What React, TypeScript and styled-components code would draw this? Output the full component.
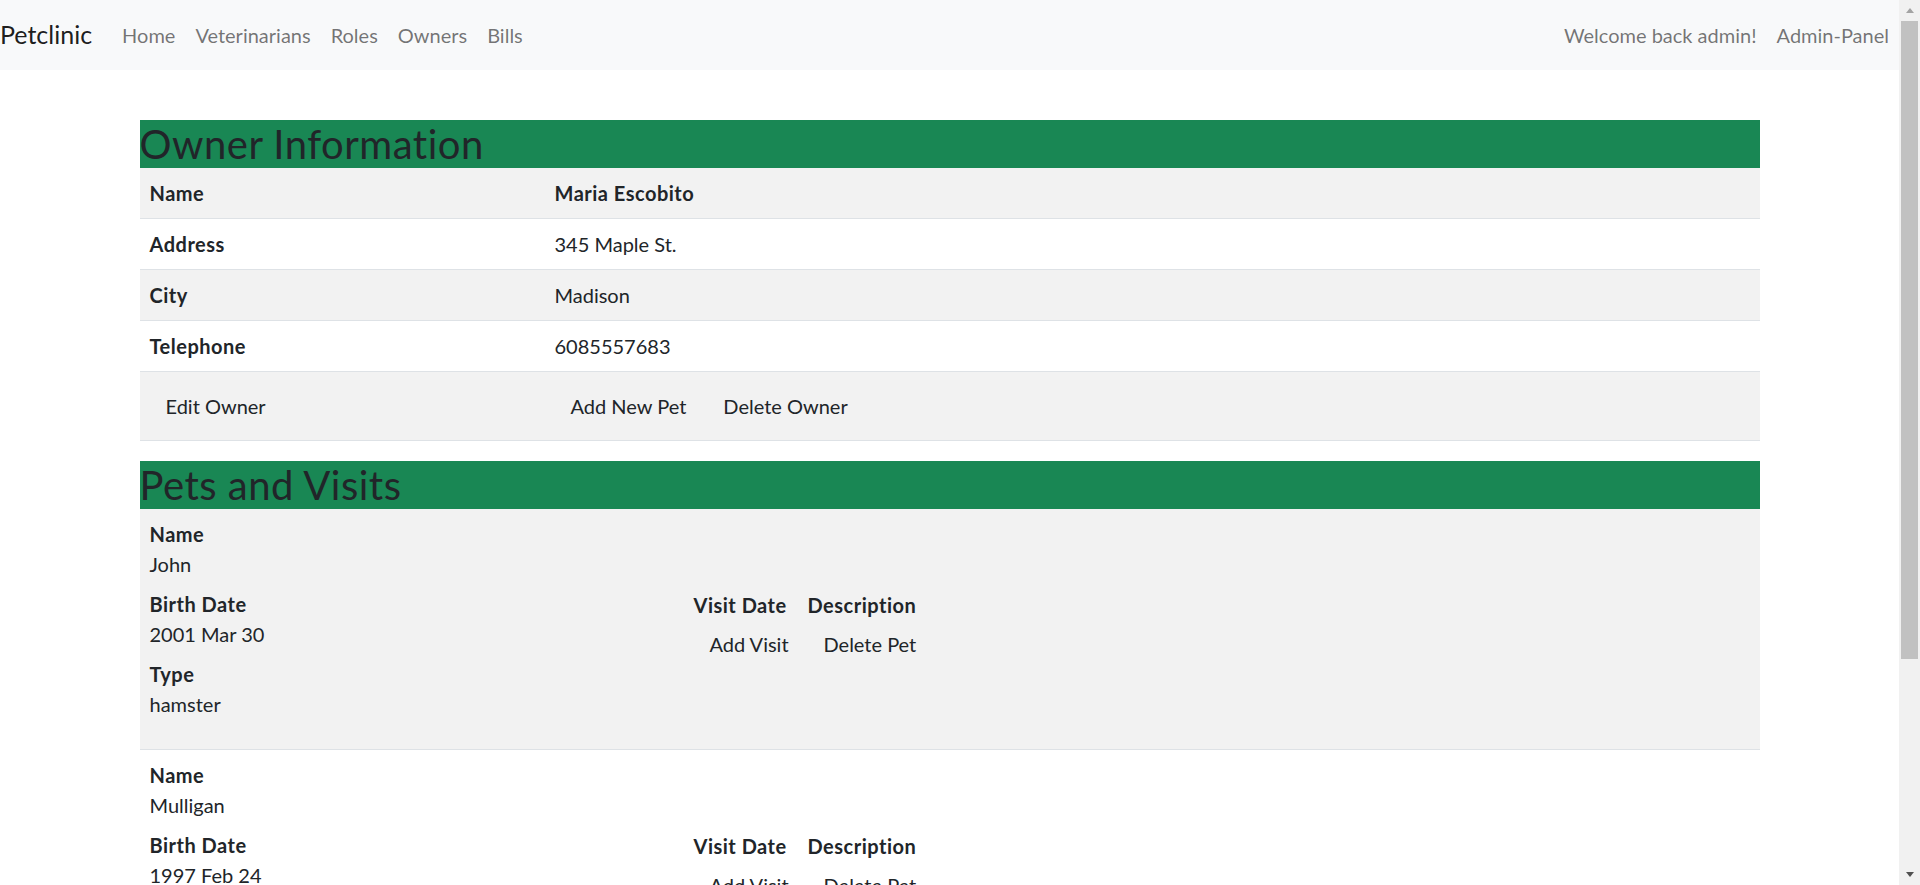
import React from 'react';
import styled, { createGlobalStyle } from 'styled-components';

const GlobalStyle = createGlobalStyle`
  *, *::before, *::after { box-sizing: border-box; }
  html { scrollbar-width: none; }
  body {
    margin: 0;
    font-family: Lato, "Noto Sans", sans-serif;
    font-size: 20px;
    line-height: 1.5;
    color: #212529;
    background: #fff;
  }
`;

const Shell = styled.div`
  display: flex;
  align-items: flex-start;
`;

const Page = styled.div`
  flex: 1;
  min-width: 0;
`;

const ScrollTrack = styled.div`
  position: sticky;
  top: 0;
  flex-shrink: 0;
  width: 21px;
  height: 100vh;
  background: #f1f1f1;
  display: flex;
  flex-direction: column;
  align-items: center;
`;

const ScrollArrow = styled.div<{ $down?: boolean }>`
  height: 21px;
  width: 21px;
  display: flex;
  align-items: center;
  justify-content: center;
  margin-top: ${(p) => (p.$down ? 'auto' : '0')};
  &::after {
    content: '';
    width: 0;
    height: 0;
    border-left: 4.5px solid transparent;
    border-right: 4.5px solid transparent;
    ${(p) =>
      p.$down
        ? 'border-top: 5px solid #505050;'
        : 'border-bottom: 5px solid #a3a3a3;'}
  }
`;

const ScrollThumb = styled.div`
  width: 17px;
  height: 638px;
  background: #c1c1c1;
`;

const Navbar = styled.nav`
  display: flex;
  align-items: center;
  height: 70px;
  padding: 10px 0;
  background: #f8f9fa;
`;

const Brand = styled.a`
  font-size: 25px;
  line-height: 37.5px;
  padding: 6.25px 0;
  margin-right: 20px;
  color: rgba(0, 0, 0, 0.9);
  text-decoration: none;
  white-space: nowrap;
`;

const NavGroup = styled.div<{ $end?: boolean }>`
  display: flex;
  margin-left: ${(p) => (p.$end ? 'auto' : '0')};
`;

const NavLink = styled.a`
  padding: 10px;
  line-height: 30px;
  color: rgba(0, 0, 0, 0.55);
  text-decoration: none;
  white-space: nowrap;
`;

const Container = styled.main`
  max-width: 1650px;
  padding: 50px 15px 160px;
  margin: 0 auto;
`;

const SectionTitle = styled.h2`
  margin: 0;
  background: #198754;
  font-size: 40px;
  line-height: 48px;
  font-weight: 400;
  letter-spacing: 0.5px;
  color: #212529;
`;

const Table = styled.table`
  width: 100%;
  border-collapse: collapse;
  margin-bottom: 20px;
`;

const Row = styled.tr<{ $striped?: boolean }>`
  background: ${(p) => (p.$striped ? '#f2f2f2' : '#fff')};
  border-bottom: 1px solid #dee2e6;
`;

const LabelCell = styled.th`
  width: 405px;
  padding: 10px;
  text-align: left;
  font-weight: 700;
  letter-spacing: 0.5px;
  vertical-align: top;
`;

const ValueCell = styled.td<{ $bold?: boolean }>`
  padding: 10px;
  font-weight: ${(p) => (p.$bold ? 700 : 400)};
  letter-spacing: ${(p) => (p.$bold ? '0.5px' : 'normal')};
`;

const ActionCell = styled.td`
  padding: 10px;
`;

const ButtonRow = styled.div`
  display: flex;
  gap: 5px;
`;

const LinkButton = styled.a`
  display: inline-block;
  padding: 8px 15px;
  border: 1px solid transparent;
  border-radius: 7.5px;
  line-height: 30px;
  color: #212529;
  text-decoration: none;
  white-space: nowrap;
`;

const PetInfoCell = styled.td`
  width: 544px;
  padding: 10px;
  vertical-align: top;
`;

const DetailList = styled.dl`
  display: flex;
  flex-direction: column;
  margin: 0 0 20px;
`;

const Term = styled.dt`
  font-weight: 700;
  letter-spacing: 0.5px;
  line-height: 30px;
`;

const Detail = styled.dd`
  margin: 0 0 10px;
  line-height: 30px;
  &:last-child { margin-bottom: 0; }
`;

const VisitsCell = styled.td`
  padding: 10px;
  vertical-align: middle;
`;

const VisitGrid = styled.div`
  display: grid;
  grid-template-columns: 114px auto;
  justify-content: start;
`;

const VisitHead = styled.div`
  font-weight: 700;
  letter-spacing: 0.5px;
  line-height: 30px;
  white-space: nowrap;
`;

type Pet = { name: string; birth: string; type: string };

const pets: Pet[] = [
  { name: 'John', birth: '2001 Mar 30', type: 'hamster' },
  { name: 'Mulligan', birth: '1997 Feb 24', type: 'dog' },
];

const owner: [string, string][] = [
  ['Address', '345 Maple St.'],
  ['City', 'Madison'],
  ['Telephone', '6085557683'],
];

export default function App() {
  return (
    <>
      <GlobalStyle />
      <Shell>
        <Page>
          <Navbar>
            <Brand href="#">Petclinic</Brand>
            <NavGroup>
              {['Home', 'Veterinarians', 'Roles', 'Owners', 'Bills'].map((l) => (
                <NavLink key={l} href="#">{l}</NavLink>
              ))}
            </NavGroup>
            <NavGroup $end>
              <NavLink href="#">Welcome back admin!</NavLink>
              <NavLink href="#">Admin-Panel</NavLink>
            </NavGroup>
          </Navbar>
          <Container>
            <SectionTitle>Owner Information</SectionTitle>
            <Table>
              <tbody>
                <Row $striped>
                  <LabelCell>Name</LabelCell>
                  <ValueCell $bold>Maria Escobito</ValueCell>
                </Row>
                {owner.map(([k, v], i) => (
                  <Row key={k} $striped={i % 2 === 1}>
                    <LabelCell>{k}</LabelCell>
                    <ValueCell>{v}</ValueCell>
                  </Row>
                ))}
                <Row $striped>
                  <ActionCell>
                    <LinkButton href="#">Edit Owner</LinkButton>
                  </ActionCell>
                  <ActionCell>
                    <ButtonRow>
                      <LinkButton href="#">Add New Pet</LinkButton>
                      <LinkButton href="#">Delete Owner</LinkButton>
                    </ButtonRow>
                  </ActionCell>
                </Row>
              </tbody>
            </Table>

            <SectionTitle>Pets and Visits</SectionTitle>
            <Table>
              <tbody>
                {pets.map((p, i) => (
                  <Row key={p.name} $striped={i % 2 === 0}>
                    <PetInfoCell>
                      <DetailList>
                        <Term>Name</Term>
                        <Detail>{p.name}</Detail>
                        <Term>Birth Date</Term>
                        <Detail>{p.birth}</Detail>
                        <Term>Type</Term>
                        <Detail>{p.type}</Detail>
                      </DetailList>
                    </PetInfoCell>
                    <VisitsCell>
                      <VisitGrid>
                        <VisitHead>Visit Date</VisitHead>
                        <VisitHead>Description</VisitHead>
                        <div><LinkButton href="#">Add Visit</LinkButton></div>
                        <div><LinkButton href="#">Delete Pet</LinkButton></div>
                      </VisitGrid>
                    </VisitsCell>
                  </Row>
                ))}
              </tbody>
            </Table>
          </Container>
        </Page>
        <ScrollTrack aria-hidden>
          <ScrollArrow />
          <ScrollThumb />
          <ScrollArrow $down />
        </ScrollTrack>
      </Shell>
    </>
  );
}
